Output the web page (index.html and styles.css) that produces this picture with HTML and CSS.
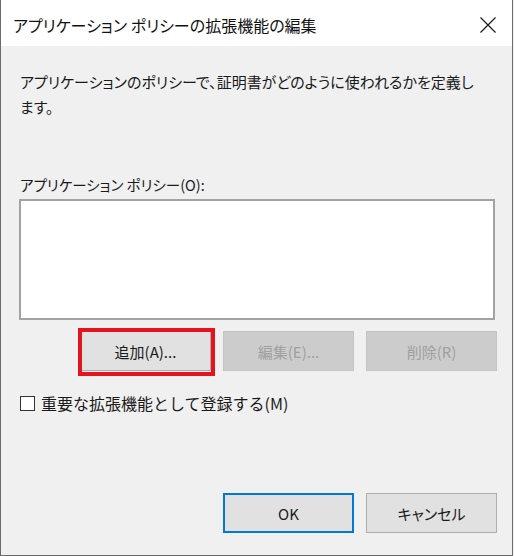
FILE: index.html
```html
<!DOCTYPE html>
<html lang="ja">
<head>
<meta charset="utf-8">
<link rel="stylesheet" href="styles.css">
</head>
<body>
<div class="window">
  <div class="titlebar">
    <span class="title">アプリケーション ポリシーの拡張機能の編集</span>
    <svg class="close" width="16" height="16" viewBox="0 0 16 16"><path d="M0.5 0.5 L15.5 15.5 M15.5 0.5 L0.5 15.5" stroke="#111" stroke-width="1.1" fill="none"/></svg>
  </div>
  <div class="content">
    <p class="desc">アプリケーションのポリシーで、証明書がどのように使われるかを定義し<br>ます。</p>
    <div class="label">アプリケーション ポリシー(O):</div>
    <div class="listbox"></div>
    <div class="btnrow">
      <div class="highlight-wrap">
        <button class="btn">追加(A)...</button>
        <span class="redbox"></span>
      </div>
      <button class="btn disabled">編集(E)...</button>
      <button class="btn disabled">削除(R)</button>
    </div>
    <label class="check"><span class="box"></span><span class="check-text">重要な拡張機能として登録する(M)</span></label>
    <div class="spacer"></div>
    <div class="footer">
      <button class="btn default">OK</button>
      <button class="btn">キャンセル</button>
    </div>
  </div>
</div>
</body>
</html>
```

FILE: styles.css
```css
html, body {
  margin: 0;
  padding: 0;
  background: #f0f0f0;
}
body {
  width: 514px;
  height: 556px;
  overflow: hidden;
  font-family: "Noto Sans CJK JP", "Noto Sans", sans-serif;
  font-feature-settings: "palt";
  color: #1a1a1a;
}
.window {
  width: 511px;
  height: 555px;
  border-left: 1px solid #6b6b6b;
  border-right: 1px solid #6b6b6b;
  border-bottom: 1px solid #6b6b6b;
  background: #f0f0f0;
  display: flex;
  flex-direction: column;
}
.titlebar {
  height: 46px;
  background: #ffffff;
  display: flex;
  align-items: center;
  justify-content: space-between;
  padding: 0 16px 0 12px;
  flex: none;
}
.title {
  font-size: 16px;
  margin-top: 3px;
  color: #111;
}
.close {
  margin-top: 3px;
}
.content {
  flex: 1;
  display: flex;
  flex-direction: column;
  padding: 0 15px 22px 18px;
}
.desc {
  margin: 23px 0 0 1px;
  font-size: 15px;
  line-height: 25px;
}
.label {
  margin: 53px 0 0 1px;
  font-size: 14.5px;
  line-height: 25px;
}
.listbox {
  margin-top: 2px;
  width: 472px;
  height: 117px;
  background: #fff;
  border: 2px solid #a2a2a2;
}
.btnrow {
  margin-top: 11px;
  display: flex;
  justify-content: flex-end;
  gap: 12px;
}
.btn {
  width: 131px;
  height: 40px;
  box-sizing: border-box;
  background: #e1e1e1;
  border: 1px solid #adadad;
  font-family: inherit;
  font-feature-settings: "palt";
  font-size: 15px;
  color: #1a1a1a;
  padding: 0;
}
.btn.disabled {
  background: #cccccc;
  border-color: #c4c4c4;
  color: #a0a0a0;
}
.btn.default {
  border: 2px solid #0078d7;
}
.highlight-wrap {
  position: relative;
  display: flex;
}
.redbox {
  position: absolute;
  left: -2px;
  top: -3px;
  right: -4px;
  bottom: -5px;
  border: 4px solid #e5131d;
}
.check {
  margin-top: 20px;
  display: flex;
  align-items: center;
  gap: 6px;
  line-height: 25px;
  margin-left: 1px;
}
.check-text {
  font-size: 16px;
  font-feature-settings: normal;
}
.box {
  width: 13px;
  height: 13px;
  border: 1px solid #333;
  background: #fff;
  flex: none;
}
.spacer {
  flex: 1;
}
.footer {
  display: flex;
  justify-content: flex-end;
  gap: 12px;
}
```
